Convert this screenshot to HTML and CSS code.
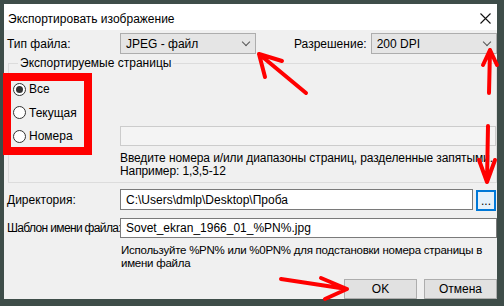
FILE: index.html
```html
<!DOCTYPE html>
<html lang="ru">
<head>
    <meta charset="UTF-8">
    <title>Экспортировать изображение</title>
    <link rel="stylesheet" href="styles.css">
</head>
<body>
    <div class="screen">
        <!-- окно диалога -->
        <div class="dialog">
            <div class="titlebar">
                <span class="title">Экспортировать изображение</span>
                <svg class="close" width="11" height="11" viewBox="0 0 11 11">
                    <path d="M0.5 0.5 L10.5 10.5 M10.5 0.5 L0.5 10.5" stroke="#111" stroke-width="1.1" fill="none"/>
                </svg>
            </div>
            <div class="content">
                <div class="row-top">
                    <span class="label">Тип файла:</span>
                    <div class="select sel-type"><span>JPEG - файл</span><i class="chev"></i></div>
                    <span class="label-res">Разрешение:</span>
                    <div class="select sel-res"><span>200 DPI</span><i class="chev"></i></div>
                </div>

                <fieldset class="pages">
                    <legend>Экспортируемые страницы</legend>
                    <div class="pages-body">
                        <div class="radios">
                            <div class="radio checked"><span class="dot"></span>Все</div>
                            <div class="radio"><span class="dot"></span>Текущая</div>
                            <div class="radio"><span class="dot"></span>Номера</div>
                        </div>
                        <div class="range">
                            <div class="input disabled"></div>
                            <div class="hint">Введите номера и/или диапазоны страниц, разделенные запятыми.<br>Например: 1,3,5-12</div>
                        </div>
                    </div>
                </fieldset>

                <div class="field-row dir-row">
                    <span class="label">Директория:</span>
                    <div class="input dir">C:\Users\dmlp\Desktop\Проба</div>
                    <div class="browse">...</div>
                </div>
                <div class="field-row tpl-row">
                    <span class="label tight">Шаблон имени файла:</span>
                    <div class="input tpl">Sovet_ekran_1966_01_%PN%.jpg</div>
                </div>
                <div class="hint hint-tpl">Используйте %PN% или %0PN% для подстановки номера страницы в<br>имени файла</div>

                <div class="buttons">
                    <div class="btn">OK</div>
                    <div class="btn">Отмена</div>
                </div>
            </div>
        </div>

        <!-- красные пометки поверх скриншота -->
        <svg class="marks" width="504" height="306" viewBox="0 0 504 306">
            <g stroke="#f00" fill="none" stroke-linecap="round" stroke-linejoin="round">
                <rect x="7" y="77" width="81" height="74" stroke-width="8" stroke-linecap="butt" stroke-linejoin="miter"/>
                <path d="M306 93 L259 54 M259 54 L282 61 M259 54 L265 77" stroke-width="4"/>
                <path d="M489 93 L490 50 M490 50 L483 65 M490 50 L497 65" stroke-width="4"/>
                <path d="M488 126 L487 182 M487 182 L479 160 M487 182 L495 160" stroke-width="4"/>
                <path d="M281 279 L347 289 M347 289 L321 278 M347 289 L325 299" stroke-width="4"/>
            </g>
        </svg>
    </div>
</body>
</html>
```

FILE: styles.css
```css
body {
    margin: 0;
    font-family: "Liberation Sans", Arial, sans-serif;
    font-size: 12px;
    color: #000;
}

.screen {
    position: relative;
    width: 504px;
    height: 306px;
    padding: 4px 7px 7px 4px;
    box-sizing: border-box;
    background-color: #3e4d49;
    overflow: hidden;
    white-space: nowrap;
}

.dialog {
    height: 295px;
    background-color: #f0f0f0;
    display: flex;
    flex-direction: column;
}

.titlebar {
    height: 26px;
    flex-shrink: 0;
    background-color: #fff;
    display: flex;
    align-items: center;
    justify-content: space-between;
    padding: 3px 6px 0 4px;
    box-sizing: border-box;
}

.close {
    margin-top: -1px;
}

.content {
    flex: 1;
    min-height: 0;
    padding: 0 0 0 3px;
}

.row-top {
    display: flex;
    align-items: center;
    height: 21px;
    margin-top: 3px;
}

.label {
    width: 113px;
    flex-shrink: 0;
}

.label.tight {
    letter-spacing: -0.65px;
}

.select {
    height: 21px;
    box-sizing: border-box;
    background-color: #e5e5e5;
    border: 1px solid #adadad;
    display: flex;
    align-items: center;
    justify-content: space-between;
    padding: 0 6px 0 5px;
}

.sel-type {
    width: 136px;
}

.label-res {
    margin-left: 38px;
    margin-right: 4px;
}

.sel-res {
    flex: 1;
}

.chev {
    width: 5px;
    height: 5px;
    border-right: 1px solid #555;
    border-bottom: 1px solid #555;
    transform: rotate(45deg);
    margin-top: -4px;
}

.pages {
    margin: 2px 0 0 1px;
    padding: 0 0 4px 0;
    border: 1px solid #dcdcdc;
    min-width: 0;
}

.pages legend {
    margin-left: 9px;
    padding: 0 2px;
    line-height: 14px;
}

.pages-body {
    display: grid;
    grid-template-columns: 111px 1fr;
}

.radios {
    display: flex;
    flex-direction: column;
    gap: 3.5px;
    padding: 9px 0 0 4px;
}

.radio {
    display: flex;
    align-items: center;
    height: 20px;
}

.dot {
    width: 13px;
    height: 13px;
    box-sizing: border-box;
    border: 1px solid #333;
    border-radius: 50%;
    background-color: #fff;
    margin-right: 3px;
    display: flex;
    align-items: center;
    justify-content: center;
}

.radio.checked .dot::after {
    content: "";
    width: 7px;
    height: 7px;
    border-radius: 50%;
    background-color: #333;
}

.range {
    padding-top: 56px;
}

.range .hint {
    letter-spacing: -0.1px;
}

.input {
    height: 20px;
    box-sizing: border-box;
    background-color: #fff;
    border: 1px solid #7a7a7a;
    padding: 0 5px;
    display: flex;
    align-items: center;
}

.input.disabled {
    background-color: #f4f4f4;
    border-color: #cccccc;
}

.hint {
    line-height: 13px;
    margin-top: 6px;
}

.field-row {
    display: flex;
    align-items: center;
}

.dir-row {
    margin-top: 5px;
}

.dir {
    height: 21px;
    width: 353px;
}

.browse {
    width: 20px;
    height: 21px;
    box-sizing: border-box;
    margin: 2px 0 0 3px;
    align-self: flex-start;
    border: 2px solid #0078d7;
    background-color: #e5f1fb;
    display: flex;
    align-items: center;
    justify-content: center;
    line-height: 1;
}

.tpl-row {
    margin-top: 7px;
}

.tpl {
    flex: 1;
}

.hint-tpl {
    margin-left: 114px;
    font-size: 11.5px;
    letter-spacing: -0.25px;
}

.buttons {
    display: flex;
    justify-content: flex-end;
    gap: 7px;
    margin-top: 9px;
}

.btn {
    width: 73px;
    height: 20px;
    box-sizing: border-box;
    background-color: #e1e1e1;
    border: 1px solid #adadad;
    display: flex;
    align-items: center;
    justify-content: center;
}

.marks {
    position: absolute;
    top: 0;
    left: 0;
}
```
